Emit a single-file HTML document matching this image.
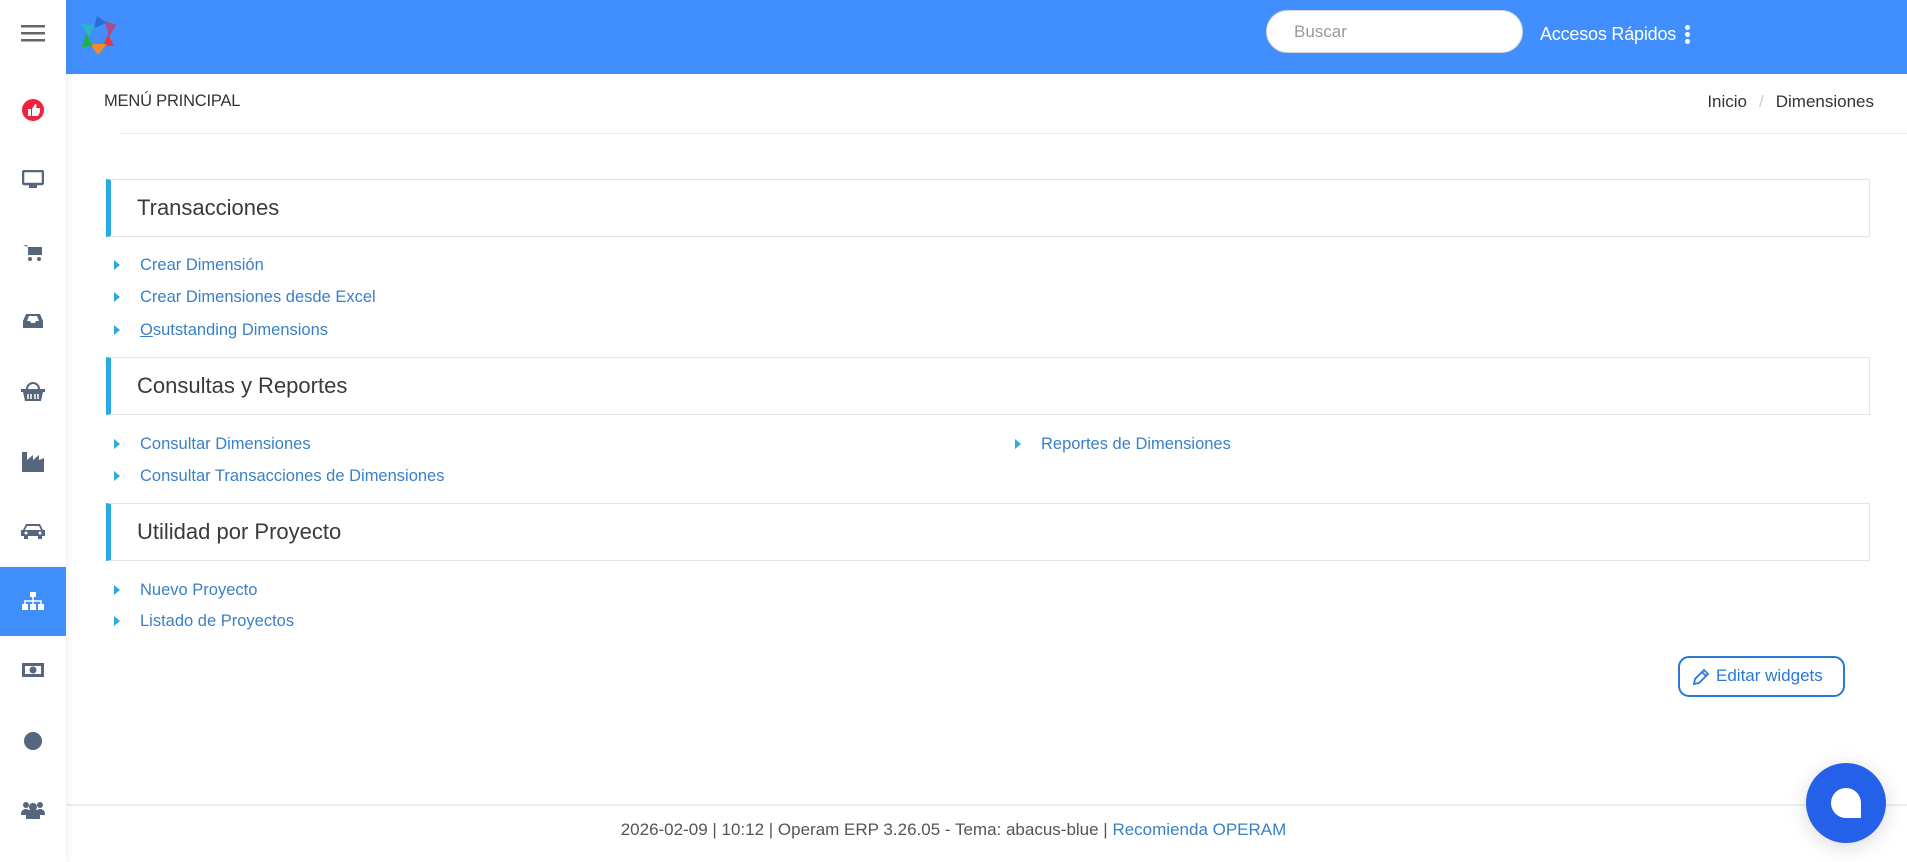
<!DOCTYPE html>
<html><head><meta charset="utf-8">
<style>
*{box-sizing:border-box;margin:0;padding:0}
body{width:1907px;height:862px;overflow:hidden;background:#fff;font-family:"Liberation Sans",sans-serif;position:relative}
.side{position:absolute;left:0;top:0;width:66px;height:862px;background:#fff;box-shadow:2px 0 8px rgba(0,0,0,.06);z-index:2}
.ic{position:absolute;left:0;width:66px;display:flex;justify-content:center;align-items:center;height:40px;margin-top:-20px}
.active{position:absolute;left:0;top:567px;width:66px;height:69px;background:#3f8efc}
.hdr{position:absolute;left:66px;top:0;right:0;height:74px;background:#418ffe}
.search{position:absolute;left:1266px;top:10px;width:257px;height:43px;background:#fff;border-radius:22px;border:1px solid #d8d8d8;color:#999;font-size:17px;padding:11px 0 0 27px}
.acc{position:absolute;left:1540px;top:24px;color:#fff;font-size:18px;letter-spacing:-0.2px}
.dots{position:absolute;left:1685px;top:25px;width:5px}
.dots i{display:block;width:5px;height:5px;border-radius:50%;background:#fff;margin-bottom:2px}
.mp{position:absolute;left:104px;top:92px;font-size:16.5px;color:#333;letter-spacing:-0.2px}
.bc{position:absolute;right:33px;top:92px;font-size:17px;color:#333}
.bc span{color:#ccc;margin:0 12px}
.hr{position:absolute;left:120px;right:0;top:133px;border-top:1px solid #eee}
.box{position:absolute;left:106px;width:1764px;height:58px;border:1px solid #e6e6e6;border-left:5px solid #29abe2;font-size:22px;color:#3a3a3a;padding:15px 0 0 26px}
.lk{position:absolute;font-size:16.5px;color:#3a80c6;padding-left:30px;line-height:20px;margin-top:-10px}
.lk:before{content:"";position:absolute;left:4px;top:5px;border-left:6px solid #29abe2;border-top:5px solid transparent;border-bottom:5px solid transparent}
.btn{position:absolute;left:1678px;top:656px;width:167px;height:41px;border:2px solid #2a78d6;border-radius:11px;color:#2a78d6;font-size:17px;padding:8px 0 0 36px}
.foot{position:absolute;left:66px;right:0;top:804px;border-top:2px solid #eee}
.ft{position:absolute;left:0;width:1907px;text-align:center;top:820px;font-size:17px;color:#555}
.ft a{color:#3a80c6;text-decoration:none}
.chat{position:absolute;left:1806px;top:763px;width:80px;height:80px;border-radius:50%;background:#2560e8;box-shadow:0 4px 20px rgba(0,0,0,.15)}
.chat i{position:absolute;left:25px;top:25px;width:30px;height:30px;background:#fff;border-radius:15px 15px 0 15px}
</style></head><body>
<div class="side">
  <div class="ic" style="top:33px"><svg width="24" height="18"><rect y="1" width="24" height="2.5" fill="#666"/><rect y="8" width="24" height="2.5" fill="#666"/><rect y="15" width="24" height="2.5" fill="#666"/></svg></div>
  <div class="ic" style="top:110px"><svg width="26" height="26" viewBox="0 0 26 26"><circle cx="13" cy="13" r="11" fill="#f0213d"/><path d="M8 12h3v7H8zM12 19v-7l3-5c2 0 2 2 1 4h4v4l-2 4z" fill="#fff"/></svg></div>
  <div class="ic" style="top:180px"><svg width="22" height="20"><rect x="1" y="1" width="20" height="13" rx="1.5" fill="none" stroke="#56667d" stroke-width="2.5"/><rect x="7" y="15" width="8" height="3" fill="#56667d"/></svg></div>
  <div class="ic" style="top:253px"><svg width="20" height="18"><path d="M0 1h4l3 10h10l2-8H5" fill="#56667d"/><rect x="5" y="3" width="14" height="8" fill="#56667d"/><circle cx="7" cy="15" r="2" fill="#56667d"/><circle cx="16" cy="15" r="2" fill="#56667d"/></svg></div>
  <div class="ic" style="top:321px"><svg width="20" height="16"><path d="M3 1h14l3 7v7H0V8z" fill="#56667d"/><path d="M4 8h3l1 2h4l1-2h3l-2-5H6z" fill="#fff"/></svg></div>
  <div class="ic" style="top:392px"><svg width="24" height="20"><path d="M6 7a6 6 0 0 1 12 0" fill="none" stroke="#56667d" stroke-width="2"/><rect x="0" y="7" width="24" height="3" fill="#56667d"/><path d="M2 10h20l-2 9H4z" fill="#56667d"/><path d="M7 12v5M10 12v5M14 12v5M17 12v5" stroke="#fff" stroke-width="1.5"/></svg></div>
  <div class="ic" style="top:462px"><svg width="22" height="20"><path d="M0 0h5v8l6-5v5l6-5v5l5-2v14H0z" fill="#56667d"/></svg></div>
  <div class="ic" style="top:531px"><svg width="24" height="18"><path d="M5 2h14l3 6h2v6h-3v3h-4v-3H7v3H3v-3H0V8h2z" fill="#56667d"/><path d="M6 4h12l2 4H4z" fill="#fff"/><circle cx="5" cy="11" r="1.5" fill="#fff"/><circle cx="19" cy="11" r="1.5" fill="#fff"/></svg></div>
  <div class="active"></div>
  <div class="ic" style="top:601px"><svg width="22" height="18"><rect x="8" y="0" width="6" height="5" fill="#fff"/><path d="M11 5v4M3 12V9h16v3M11 9v3" stroke="#fff" stroke-width="1.5" fill="none"/><rect x="0" y="12" width="6" height="6" fill="#fff"/><rect x="8" y="12" width="6" height="6" fill="#fff"/><rect x="16" y="12" width="6" height="6" fill="#fff"/></svg></div>
  <div class="ic" style="top:670px"><svg width="22" height="14"><rect x="0" y="0" width="22" height="14" fill="#56667d"/><rect x="3" y="3" width="16" height="8" fill="#fff"/><circle cx="11" cy="7" r="3.5" fill="#56667d"/></svg></div>
  <div class="ic" style="top:741px"><svg width="20" height="20"><circle cx="10" cy="10" r="9" fill="#56667d"/></svg></div>
  <div class="ic" style="top:810px"><svg width="24" height="18"><circle cx="5" cy="4" r="3" fill="#56667d"/><circle cx="19" cy="4" r="3" fill="#56667d"/><circle cx="12" cy="6" r="4" fill="#56667d"/><path d="M0 13a5 5 0 0 1 8-4h8a5 5 0 0 1 8 4v1H19v4H5v-4H0z" fill="#56667d"/></svg></div>
</div>
<div class="hdr">
  <svg style="position:absolute;left:15px;top:16px" width="38" height="40" viewBox="0 0 38 40"><polygon points="16,0 26,7 13,12" fill="#2a6fd6"/><polygon points="24,5 35,9 28,21" fill="#b04a8a"/><polygon points="27,18 33,30 22,30" fill="#e33b3b"/><polygon points="26,28 17,39 9,28" fill="#f08a2a"/><polygon points="12,30 1,31 5,17" fill="#1fb04a"/><polygon points="8,21 0,8 14,9" fill="#2cb5c8"/></svg>
</div>
<div class="search">Buscar</div>
<div class="acc">Accesos Rápidos</div>
<div class="dots"><i></i><i></i><i></i></div>
<div class="mp">MENÚ PRINCIPAL</div>
<div class="bc">Inicio<span>/</span>Dimensiones</div>
<div class="hr"></div>

<div class="box" style="top:179px">Transacciones</div>
<div class="lk" style="left:110px;top:265px">Crear Dimensión</div>
<div class="lk" style="left:110px;top:297px">Crear Dimensiones desde Excel</div>
<div class="lk" style="left:110px;top:330px"><u>O</u>sutstanding Dimensions</div>

<div class="box" style="top:357px">Consultas y Reportes</div>
<div class="lk" style="left:110px;top:444px">Consultar Dimensiones</div>
<div class="lk" style="left:110px;top:476px">Consultar Transacciones de Dimensiones</div>
<div class="lk" style="left:1011px;top:444px">Reportes de Dimensiones</div>

<div class="box" style="top:503px">Utilidad por Proyecto</div>
<div class="lk" style="left:110px;top:590px">Nuevo Proyecto</div>
<div class="lk" style="left:110px;top:621px">Listado de Proyectos</div>

<div class="btn"><svg style="position:absolute;left:12px;top:10px" width="18" height="18" viewBox="0 0 18 18"><path d="M2 16l1-5L12 2l4 4-9 9z" fill="none" stroke="#2a78d6" stroke-width="1.8"/><path d="M10 4l4 4" stroke="#2a78d6" stroke-width="1.8"/></svg>Editar widgets</div>

<div class="foot"></div>
<div class="ft">2026-02-09 | 10:12 | Operam ERP 3.26.05 - Tema: abacus-blue | <a>Recomienda OPERAM</a></div>
<div class="chat"><i></i></div>
</body></html>
